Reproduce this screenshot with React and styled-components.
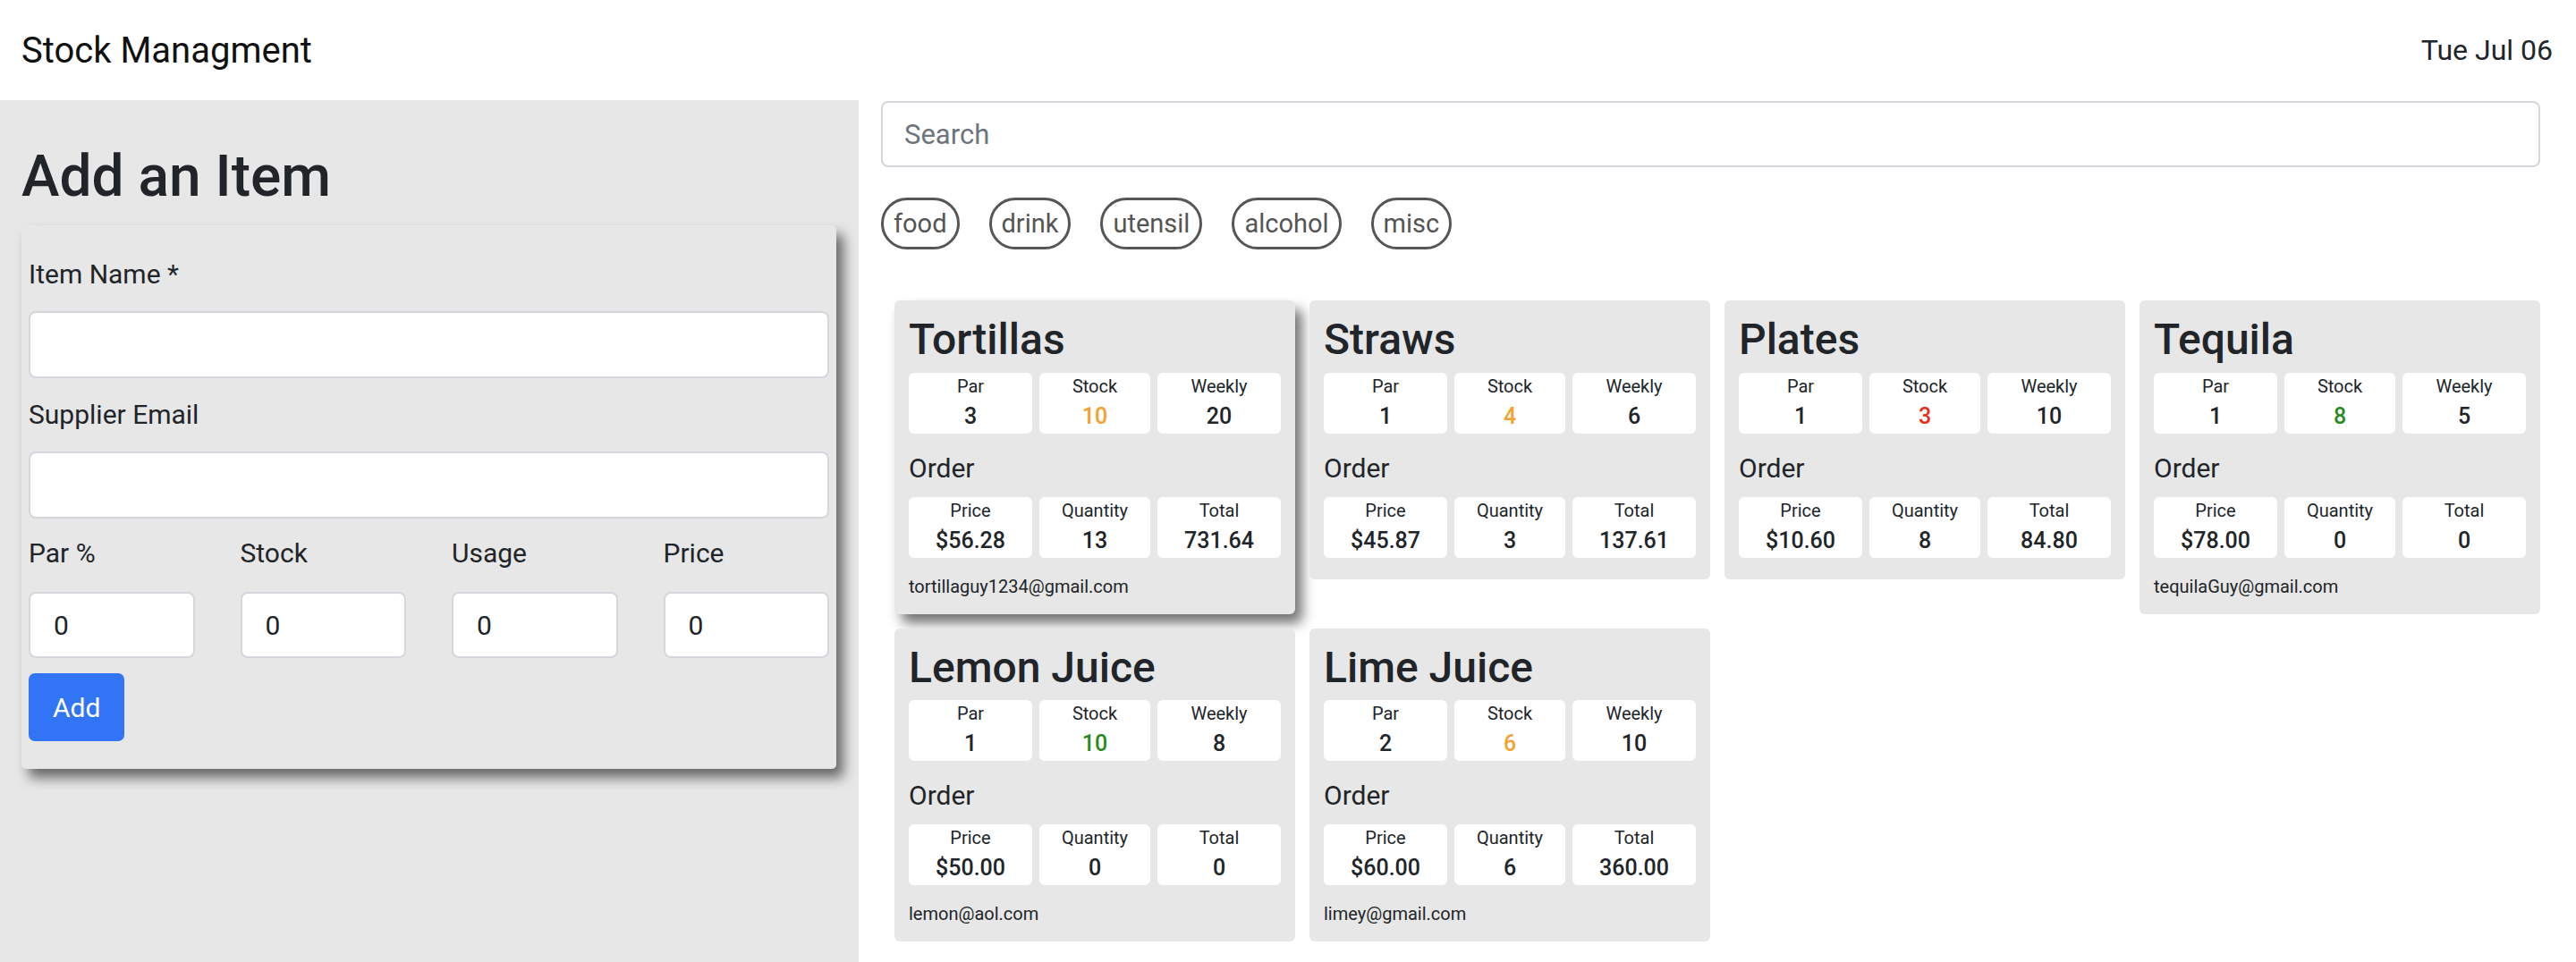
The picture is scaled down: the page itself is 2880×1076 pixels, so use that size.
import React from "react";
import styled, { createGlobalStyle } from "styled-components";

const Global = createGlobalStyle`
  html, body { margin: 0; padding: 0; }
  body {
    font-family: Roboto, "Liberation Sans", Arial, sans-serif;
    color: #212529;
    background: #ffffff;
  }
  * { box-sizing: border-box; }
`;

const Page = styled.div`
  display: flex;
  flex-direction: column;
  min-height: 100vh;
`;

const Header = styled.header`
  height: 112px;
  display: flex;
  align-items: center;
  justify-content: space-between;
  padding: 0 26px 0 24px;
`;

const Brand = styled.div`
  font-size: 40px;
  font-weight: 400;
  color: #111;
`;

const DateText = styled.div`
  font-size: 32px;
  color: #212529;
`;

const Main = styled.div`
  flex: 1;
  display: grid;
  grid-template-columns: 960px 1fr;
`;

const LeftPanel = styled.section`
  background: #e7e7e7;
  padding: 46px 25px 0 24px;
`;

const Heading = styled.h1`
  margin: 0 0 15px;
  font-size: 64px;
  font-weight: 500;
  line-height: 1.24;
`;

const FormCard = styled.form`
  background: #e7e7e7;
  border-radius: 5px;
  padding: 32px 8px 31px;
  box-shadow: 8px 10px 14px rgba(0, 0, 0, 0.55);
  display: flex;
  flex-direction: column;
`;

const Label = styled.label`
  display: block;
  font-size: 30px;
  line-height: 45px;
  margin-bottom: ${(p) => p.$mb || 19}px;
`;

const TextInput = styled.input`
  display: block;
  width: 100%;
  height: ${(p) => p.$h || 75}px;
  border: 2px solid #d3d7dc;
  border-radius: 8px;
  background: #fff;
  font-family: inherit;
  font-size: 30px;
  color: #212529;
  padding: 0 26px;
  margin-bottom: ${(p) => p.$mb || 0}px;
  outline: none;
  &::placeholder { color: #6c757d; }
`;

const NumberGrid = styled.div`
  display: grid;
  grid-template-columns: repeat(4, 1fr);
  column-gap: 51px;
  margin-bottom: 17px;
`;

const Field = styled.div`
  display: flex;
  flex-direction: column;
`;

const AddButton = styled.button`
  align-self: flex-start;
  height: 76px;
  padding: 0 27px;
  border: none;
  border-radius: 7px;
  background: #3174f6;
  color: #fff;
  font-family: inherit;
  font-size: 30px;
`;

const RightPanel = styled.section`
  padding: 1px 40px 0 25px;
`;

const Search = styled.input`
  display: block;
  width: 100%;
  height: 74px;
  border: 2px solid #d3d7dc;
  border-radius: 8px;
  font-family: inherit;
  font-size: 31px;
  padding: 0 24px;
  color: #212529;
  outline: none;
  &::placeholder { color: #6c757d; }
`;

const Pills = styled.div`
  display: flex;
  gap: 33px;
  margin: 34px 0 57px;
`;

const Pill = styled.button`
  height: 58px;
  padding: 0 11px;
  border: 3px solid #565656;
  border-radius: 29px;
  background: #fff;
  color: #555;
  font-family: inherit;
  font-size: 29px;
`;

const CardGrid = styled.div`
  display: flex;
  flex-wrap: wrap;
  align-items: flex-start;
  gap: 16px;
  padding-left: 15px;
`;

const Card = styled.div`
  width: 448px;
  background: #e7e7e7;
  border-radius: 6px;
  padding: 15px 16px 16px;
  box-shadow: ${(p) => (p.$raised ? "8px 10px 14px rgba(0,0,0,0.55)" : "none")};
`;

const CardTitle = styled.h2`
  margin: 0 0 8px;
  font-size: 48px;
  font-weight: 500;
  line-height: 1.2;
`;

const StatRow = styled.div`
  display: grid;
  grid-template-columns: 138fr 124fr 138fr;
  gap: 8px;
  margin-bottom: ${(p) => p.$mb || 0}px;
`;

const StatBox = styled.div`
  background: #fff;
  border-radius: 6px;
  text-align: center;
  display: flex;
  flex-direction: column;
`;

const StatLabel = styled.span`
  font-size: 20px;
  line-height: 30px;
`;

const StatValue = styled.span`
  font-size: 25px;
  line-height: 38px;
  font-weight: 500;
  color: ${(p) => p.$color || "#212529"};
`;

const OrderTitle = styled.div`
  font-size: 30px;
  line-height: 45px;
  margin: 16px 0 10px;
`;

const Email = styled.div`
  font-size: 20px;
  line-height: 30px;
  margin-top: 17px;
`;

const COLORS = {
  orange: "#f5a030",
  red: "#e5321f",
  green: "#2a8a1e",
};

const items = [
  { name: "Tortillas", par: 3, stock: 10, sc: "orange", weekly: 20, price: "$56.28", qty: 13, total: "731.64", email: "tortillaguy1234@gmail.com", raised: true },
  { name: "Straws", par: 1, stock: 4, sc: "orange", weekly: 6, price: "$45.87", qty: 3, total: "137.61" },
  { name: "Plates", par: 1, stock: 3, sc: "red", weekly: 10, price: "$10.60", qty: 8, total: "84.80" },
  { name: "Tequila", par: 1, stock: 8, sc: "green", weekly: 5, price: "$78.00", qty: 0, total: "0", email: "tequilaGuy@gmail.com" },
  { name: "Lemon Juice", par: 1, stock: 10, sc: "green", weekly: 8, price: "$50.00", qty: 0, total: "0", email: "lemon@aol.com" },
  { name: "Lime Juice", par: 2, stock: 6, sc: "orange", weekly: 10, price: "$60.00", qty: 6, total: "360.00", email: "limey@gmail.com" },
];

function Stat({ label, value, color }) {
  return (
    <StatBox>
      <StatLabel>{label}</StatLabel>
      <StatValue $color={color}>{value}</StatValue>
    </StatBox>
  );
}

function ItemCard({ item }) {
  return (
    <Card $raised={item.raised}>
      <CardTitle>{item.name}</CardTitle>
      <StatRow>
        <Stat label="Par" value={item.par} />
        <Stat label="Stock" value={item.stock} color={COLORS[item.sc]} />
        <Stat label="Weekly" value={item.weekly} />
      </StatRow>
      <OrderTitle>Order</OrderTitle>
      <StatRow $mb={8}>
        <Stat label="Price" value={item.price} />
        <Stat label="Quantity" value={item.qty} />
        <Stat label="Total" value={item.total} />
      </StatRow>
      {item.email && <Email>{item.email}</Email>}
    </Card>
  );
}

export default function App() {
  return (
    <Page>
      <Global />
      <Header>
        <Brand>Stock Managment</Brand>
        <DateText>Tue Jul 06</DateText>
      </Header>
      <Main>
        <LeftPanel>
          <Heading>Add an Item</Heading>
          <FormCard onSubmit={(e) => e.preventDefault()}>
            <Label>Item Name *</Label>
            <TextInput $mb={18} />
            <Label>Supplier Email</Label>
            <TextInput $mb={16} />
            <NumberGrid>
              {["Par %", "Stock", "Usage", "Price"].map((l) => (
                <Field key={l}>
                  <Label $mb={21}>{l}</Label>
                  <TextInput $h={74} defaultValue="0" />
                </Field>
              ))}
            </NumberGrid>
            <AddButton type="submit">Add</AddButton>
          </FormCard>
        </LeftPanel>
        <RightPanel>
          <Search placeholder="Search" />
          <Pills>
            {["food", "drink", "utensil", "alcohol", "misc"].map((p) => (
              <Pill key={p}>{p}</Pill>
            ))}
          </Pills>
          <CardGrid>
            {items.map((it) => (
              <ItemCard key={it.name} item={it} />
            ))}
          </CardGrid>
        </RightPanel>
      </Main>
    </Page>
  );
}
